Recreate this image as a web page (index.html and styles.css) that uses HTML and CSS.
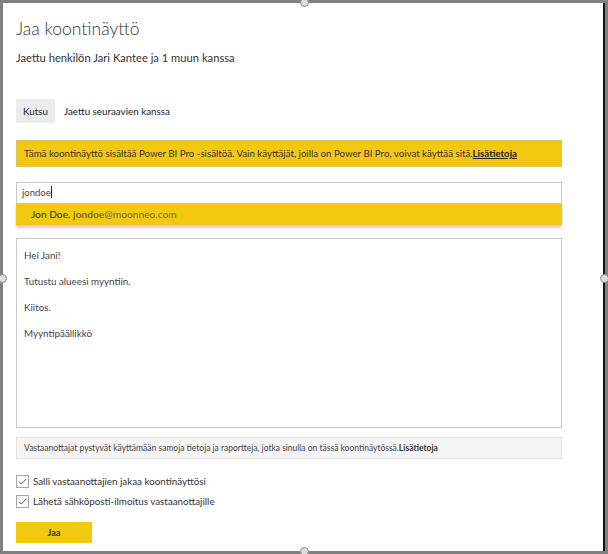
FILE: index.html
```html
<!DOCTYPE html>
<html lang="fi">
<head>
<meta charset="utf-8">
<title>Jaa koontinäyttö</title>
<link rel="stylesheet" href="styles.css">
</head>
<body>
<div class="panel">
  <span class="handle handle-top"></span>
  <span class="handle handle-left"></span>
  <span class="handle handle-right"></span>
  <span class="handle handle-bottom"></span>
  <h1 class="title">Jaa koontinäyttö</h1>
  <p class="subtitle">Jaettu henkilön Jari Kantee ja 1 muun kanssa</p>
  <div class="tabs">
    <span class="tab tab-active">Kutsu</span>
    <span class="tab">Jaettu seuraavien kanssa</span>
  </div>
  <div class="banner">Tämä koontinäyttö sisältää Power BI Pro -sisältöä. Vain käyttäjät, joilla on Power BI Pro, voivat käyttää sitä.<a class="banner-link" href="#">Lisätietoja</a></div>
  <div class="search">
    <div class="input">jondoe<span class="caret"></span></div>
    <div class="suggest"><span class="s-name">Jon Doe.</span> <span class="s-mail"><b>jondoe</b>@moonneo.com</span></div>
  </div>
  <div class="message">
    <p>Hei Jani!</p>
    <p>Tutustu alueesi myyntiin.</p>
    <p>Kiitos.</p>
    <p>Myyntipäällikkö</p>
  </div>
  <div class="info">Vastaanottajat pystyvät käyttämään samoja tietoja ja raportteja, jotka sinulla on tässä koontinäytössä.<b>Lisätietoja</b></div>
  <div class="checks">
    <label class="check"><span class="box"><svg viewBox="0 0 13 13" width="13" height="13"><path d="M3 6.8 L5.3 9.1 L10 4" fill="none" stroke="#555" stroke-width="1"/></svg></span>Salli vastaanottajien jakaa koontinäyttösi</label>
    <label class="check"><span class="box"><svg viewBox="0 0 13 13" width="13" height="13"><path d="M3 6.8 L5.3 9.1 L10 4" fill="none" stroke="#555" stroke-width="1"/></svg></span>Lähetä sähköposti-ilmoitus vastaanottajille</label>
  </div>
  <button class="share">Jaa</button>
</div>
</body>
</html>
```
FILE: styles.css
```css
html, body {
  margin: 0;
  padding: 0;
}
body {
  background: #808080;
  width: 608px;
  height: 554px;
  padding: 3px 0 0 3px;
  box-sizing: border-box;
  font-family: "Lato", "Open Sans", sans-serif;
  color: #333;
}
.panel {
  position: relative;
  width: 602px;
  height: 548px;
  background: #fff;
  border-right: 2px solid #111;
  padding: 13px 0 0 13px;
  box-sizing: border-box;
}
.handle {
  position: absolute;
  width: 7px;
  height: 7px;
  border: 1px solid #888;
  border-radius: 50%;
  background: #ddd;
}
.handle-top { top: -5px; left: 297px; }
.handle-bottom { bottom: -5px; left: 297px; }
.handle-left { left: -5px; top: 271px; }
.handle-right { right: -6px; top: 271px; }
.title {
  margin: 0;
  font-size: 17.5px;
  line-height: 26px;
  font-weight: 300;
  color: #333;
}
.subtitle {
  margin: 8px 0 0;
  font-size: 11.2px;
  line-height: 16px;
  color: #333;
}
.tabs {
  margin-top: 33px;
  display: flex;
  align-items: center;
  height: 24px;
}
.tab {
  font-size: 9.8px;
  line-height: 24px;
  padding: 0 9px;
  color: #222;
}
.tab-active {
  background: #ebebeb;
  width: 39px;
  box-sizing: border-box;
  text-align: center;
  padding: 0;
}
.banner {
  margin-top: 17px;
  width: 546px;
  height: 27px;
  box-sizing: border-box;
  background: #f2c811;
  border: 1px solid #e0c060;
  font-size: 9.7px;
  line-height: 25px;
  padding-left: 7px;
  color: #333;
  white-space: nowrap;
}
.banner-link {
  color: #222;
  font-weight: 700;
  text-decoration: underline;
}
.search {
  margin-top: 15px;
  width: 546px;
}
.input {
  height: 22px;
  box-sizing: border-box;
  border: 1px solid #c8c8c8;
  font-size: 9.5px;
  line-height: 20px;
  padding-left: 5px;
  color: #444;
}
.caret {
  display: inline-block;
  width: 1px;
  height: 12px;
  background: #222;
  vertical-align: -2px;
}
.suggest {
  height: 21px;
  background: #f2c811;
  font-size: 10.2px;
  line-height: 21px;
  padding-left: 15px;
  box-shadow: 0 3px 3px rgba(190, 90, 90, 0.35);
}
.s-name { color: #333; }
.s-mail { color: #7a6a40; }
.s-mail b { font-weight: 700; }
.message {
  margin-top: 13px;
  width: 546px;
  height: 190px;
  box-sizing: border-box;
  border: 1px solid #c8c8c8;
  padding: 8px 0 0 7px;
  font-size: 9.8px;
  color: #444;
}
.message p {
  margin: 0 0 10px;
  line-height: 16px;
}
.info {
  margin-top: 9px;
  width: 546px;
  height: 22px;
  box-sizing: border-box;
  background: #f4f4f4;
  border: 1px solid #e2e2e2;
  font-size: 8.5px;
  line-height: 20px;
  padding-left: 7px;
  color: #444;
  white-space: nowrap;
}
.info b { color: #333; }
.checks {
  margin-top: 12px;
  display: flex;
  flex-direction: column;
}
.check {
  display: flex;
  align-items: center;
  height: 20px;
  font-size: 9.8px;
  color: #333;
}
.box {
  width: 13px;
  height: 13px;
  box-sizing: border-box;
  border: 1px solid #a6a6a6;
  background: #fff;
  margin-right: 4px;
  display: flex;
  align-items: center;
  justify-content: center;
}
.box svg { display: block; margin: -1px; }
.share {
  margin-top: 11px;
  display: block;
  width: 76px;
  height: 21px;
  border: 0;
  background: #f2c811;
  font-family: inherit;
  font-size: 9px;
  font-weight: 700;
  color: #333;
  padding: 0;
}
```
